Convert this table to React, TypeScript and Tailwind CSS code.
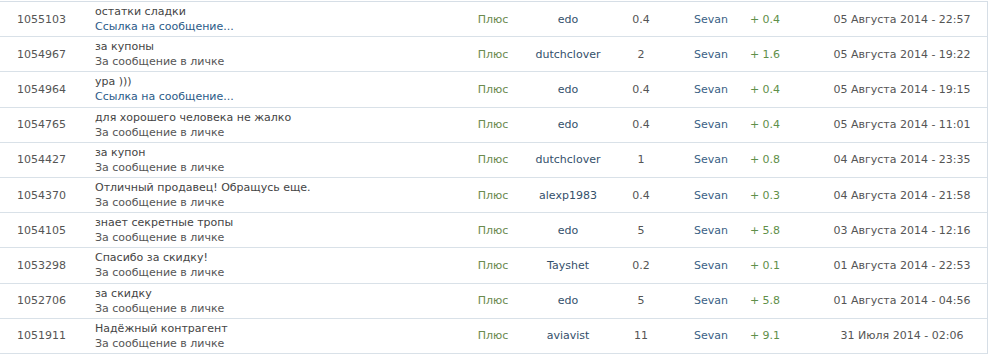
import React from 'react';

interface Row {
  id: string;
  text: string;
  link: boolean;
  user: string;
  amount: string;
  delta: string;
  date: string;
}

const rows: Row[] = [
  { id: '1055103', text: 'остатки сладки', link: true, user: 'edo', amount: '0.4', delta: '+ 0.4', date: '05 Августа 2014 - 22:57' },
  { id: '1054967', text: 'за купоны', link: false, user: 'dutchclover', amount: '2', delta: '+ 1.6', date: '05 Августа 2014 - 19:22' },
  { id: '1054964', text: 'ура )))', link: true, user: 'edo', amount: '0.4', delta: '+ 0.4', date: '05 Августа 2014 - 19:15' },
  { id: '1054765', text: 'для хорошего человека не жалко', link: false, user: 'edo', amount: '0.4', delta: '+ 0.4', date: '05 Августа 2014 - 11:01' },
  { id: '1054427', text: 'за купон', link: false, user: 'dutchclover', amount: '1', delta: '+ 0.8', date: '04 Августа 2014 - 23:35' },
  { id: '1054370', text: 'Отличный продавец! Обращусь еще.', link: false, user: 'alexp1983', amount: '0.4', delta: '+ 0.3', date: '04 Августа 2014 - 21:58' },
  { id: '1054105', text: 'знает секретные тропы', link: false, user: 'edo', amount: '5', delta: '+ 5.8', date: '03 Августа 2014 - 12:16' },
  { id: '1053298', text: 'Спасибо за скидку!', link: false, user: 'Tayshet', amount: '0.2', delta: '+ 0.1', date: '01 Августа 2014 - 22:53' },
  { id: '1052706', text: 'за скидку', link: false, user: 'edo', amount: '5', delta: '+ 5.8', date: '01 Августа 2014 - 04:56' },
  { id: '1051911', text: 'Надёжный контрагент', link: false, user: 'aviavist', amount: '11', delta: '+ 9.1', date: '31 Июля 2014 - 02:06' },
];

const cols = 'grid grid-cols-[80px_375px_76px_74px_72px_68px_40px_202px]';

export default function App() {
  return (
    <div className="w-[988px] h-[356px] bg-white pt-[1px] text-[11px] leading-[15px] text-[#555]" style={{ fontFamily: '"DejaVu Sans", Verdana, sans-serif' }}>
      <div className="w-[988px] border-t border-r border-[#d6dee6]">
        {rows.map((r) => (
          <div key={r.id} className={`${cols} h-[35.2px] border-b border-[#d9e1e8] items-center`}>
            <div className="pl-[17px] text-[#555]">{r.id}</div>
            <div className="pl-[15px] flex flex-col">
              <span className="text-[#444]">{r.text}</span>
              {r.link ? (
                <span className="text-[#2b5b88]">Ссылка на сообщение...</span>
              ) : (
                <span className="text-[#555]">За сообщение в личке</span>
              )}
            </div>
            <div className="text-center text-[#6b8a4e]">Плюс</div>
            <div className="text-center text-[#34506b]">{r.user}</div>
            <div className="text-center text-[#555]">{r.amount}</div>
            <div className="text-center text-[#3a5f85]">Sevan</div>
            <div className="text-center text-[#5f8f4a] whitespace-nowrap">{r.delta}</div>
            <div className="pl-[32px] text-center text-[#555] whitespace-nowrap">{r.date}</div>
          </div>
        ))}
      </div>
    </div>
  );
}
